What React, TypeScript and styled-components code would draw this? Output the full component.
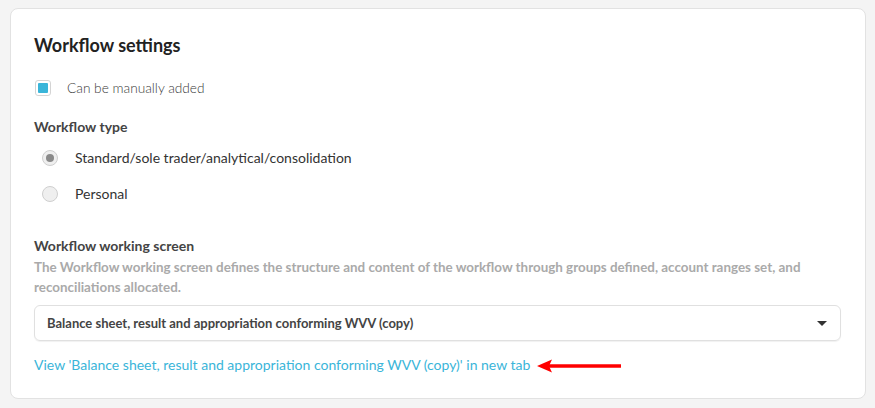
import React from "react";
import styled, { createGlobalStyle } from "styled-components";

const Global = createGlobalStyle`
  html, body { margin: 0; padding: 0; background: #f4f4f4; }
  body { font-family: Lato, "Open Sans", sans-serif; }
  #root { padding: 8px 9px 8px 10px; }
`;

const Card = styled.div`
  background: #fff;
  border: 1px solid #e2e2e2;
  border-radius: 8px;
  padding: 23px 24px 24px 23px;
  height: 391px;
  box-sizing: border-box;
  display: flex;
  flex-direction: column;
`;

const Title = styled.h2`
  margin: 0;
  font-size: 18px;
  font-weight: 700;
  color: #222;
  line-height: 26px;
`;

const CheckRow = styled.label`
  display: flex;
  align-items: center;
  gap: 16px;
  margin-top: 22px;
  margin-left: 1px;
  font-size: 13.7px;
  font-weight: 300;
  color: #3a3a3a;
  line-height: 16px;
`;

const CheckBox = styled.span`
  width: 16px;
  height: 16px;
  box-sizing: border-box;
  border: 1px solid #d4d4d4;
  border-radius: 3px;
  background: #fff;
  display: flex;
  align-items: center;
  justify-content: center;
  &::after {
    content: "";
    width: 10px;
    height: 10px;
    border-radius: 1px;
    background: #3ab5d9;
  }
`;

const SectionLabel = styled.div`
  font-size: 14px;
  font-weight: 700;
  color: #444;
  line-height: 18px;
`;

const TypeSection = styled.div`
  margin-top: 22px;
`;

const RadioList = styled.div`
  display: flex;
  flex-direction: column;
  gap: 20px;
  margin-top: 14px;
  margin-left: 8px;
`;

const RadioRow = styled.label`
  display: flex;
  align-items: center;
  gap: 17px;
  font-size: 14px;
  color: #333;
  line-height: 16px;
`;

const Radio = styled.span<{ $checked?: boolean }>`
  width: 16px;
  height: 16px;
  box-sizing: border-box;
  border-radius: 50%;
  border: 1px solid #cfcfcf;
  background: #efefef;
  display: flex;
  align-items: center;
  justify-content: center;
  &::after {
    content: "";
    width: 8px;
    height: 8px;
    border-radius: 50%;
    background: ${(p) => (p.$checked ? "#8a8a8a" : "transparent")};
  }
`;

const ScreenSection = styled.div`
  margin-top: 35px;
`;

const Description = styled.p`
  margin: 2px 0 0;
  font-size: 13.4px;
  font-weight: 700;
  color: #aaa;
  line-height: 20px;
`;

const Select = styled.div`
  margin-top: 8px;
  height: 36px;
  box-sizing: border-box;
  border: 1px solid #e0e0e0;
  border-radius: 6px;
  box-shadow: 0 1px 1px rgba(0, 0, 0, 0.06);
  display: flex;
  align-items: center;
  justify-content: space-between;
  padding: 0 13px 0 12px;
  font-size: 13px;
  font-weight: 700;
  color: #444;
`;

const Caret = styled.span`
  width: 0;
  height: 0;
  border-left: 5px solid transparent;
  border-right: 5px solid transparent;
  border-top: 5px solid #333;
`;

const LinkRow = styled.div`
  display: flex;
  align-items: center;
  margin-top: 14px;
`;

const Link = styled.a`
  font-size: 14px;
  color: #3ab5d9;
  text-decoration: none;
  line-height: 20px;
`;

const Arrow = styled.svg`
  margin-left: 7px;
  margin-top: 2px;
`;

export default function App() {
  return (
    <>
      <Global />
      <Card>
        <Title>Workflow settings</Title>
        <CheckRow>
          <CheckBox />
          Can be manually added
        </CheckRow>
        <TypeSection>
          <SectionLabel>Workflow type</SectionLabel>
          <RadioList>
            <RadioRow>
              <Radio $checked />
              Standard/sole trader/analytical/consolidation
            </RadioRow>
            <RadioRow>
              <Radio />
              Personal
            </RadioRow>
          </RadioList>
        </TypeSection>
        <ScreenSection>
          <SectionLabel>Workflow working screen</SectionLabel>
          <Description>
            The Workflow working screen defines the structure and content of the workflow through groups defined, account ranges set, and
            <br />
            reconciliations allocated.
          </Description>
          <Select>
            Balance sheet, result and appropriation conforming WVV (copy)
            <Caret />
          </Select>
          <LinkRow>
            <Link href="#">
              View 'Balance sheet, result and appropriation conforming WVV (copy)' in new tab
            </Link>
            <Arrow width="86" height="16" viewBox="0 0 86 16">
              <line x1="10" y1="8" x2="84" y2="8" stroke="#ff0000" strokeWidth="3.5" />
              <polygon points="0,8 15,1.5 12,8 15,14.5" fill="#ff0000" />
            </Arrow>
          </LinkRow>
        </ScreenSection>
      </Card>
    </>
  );
}
